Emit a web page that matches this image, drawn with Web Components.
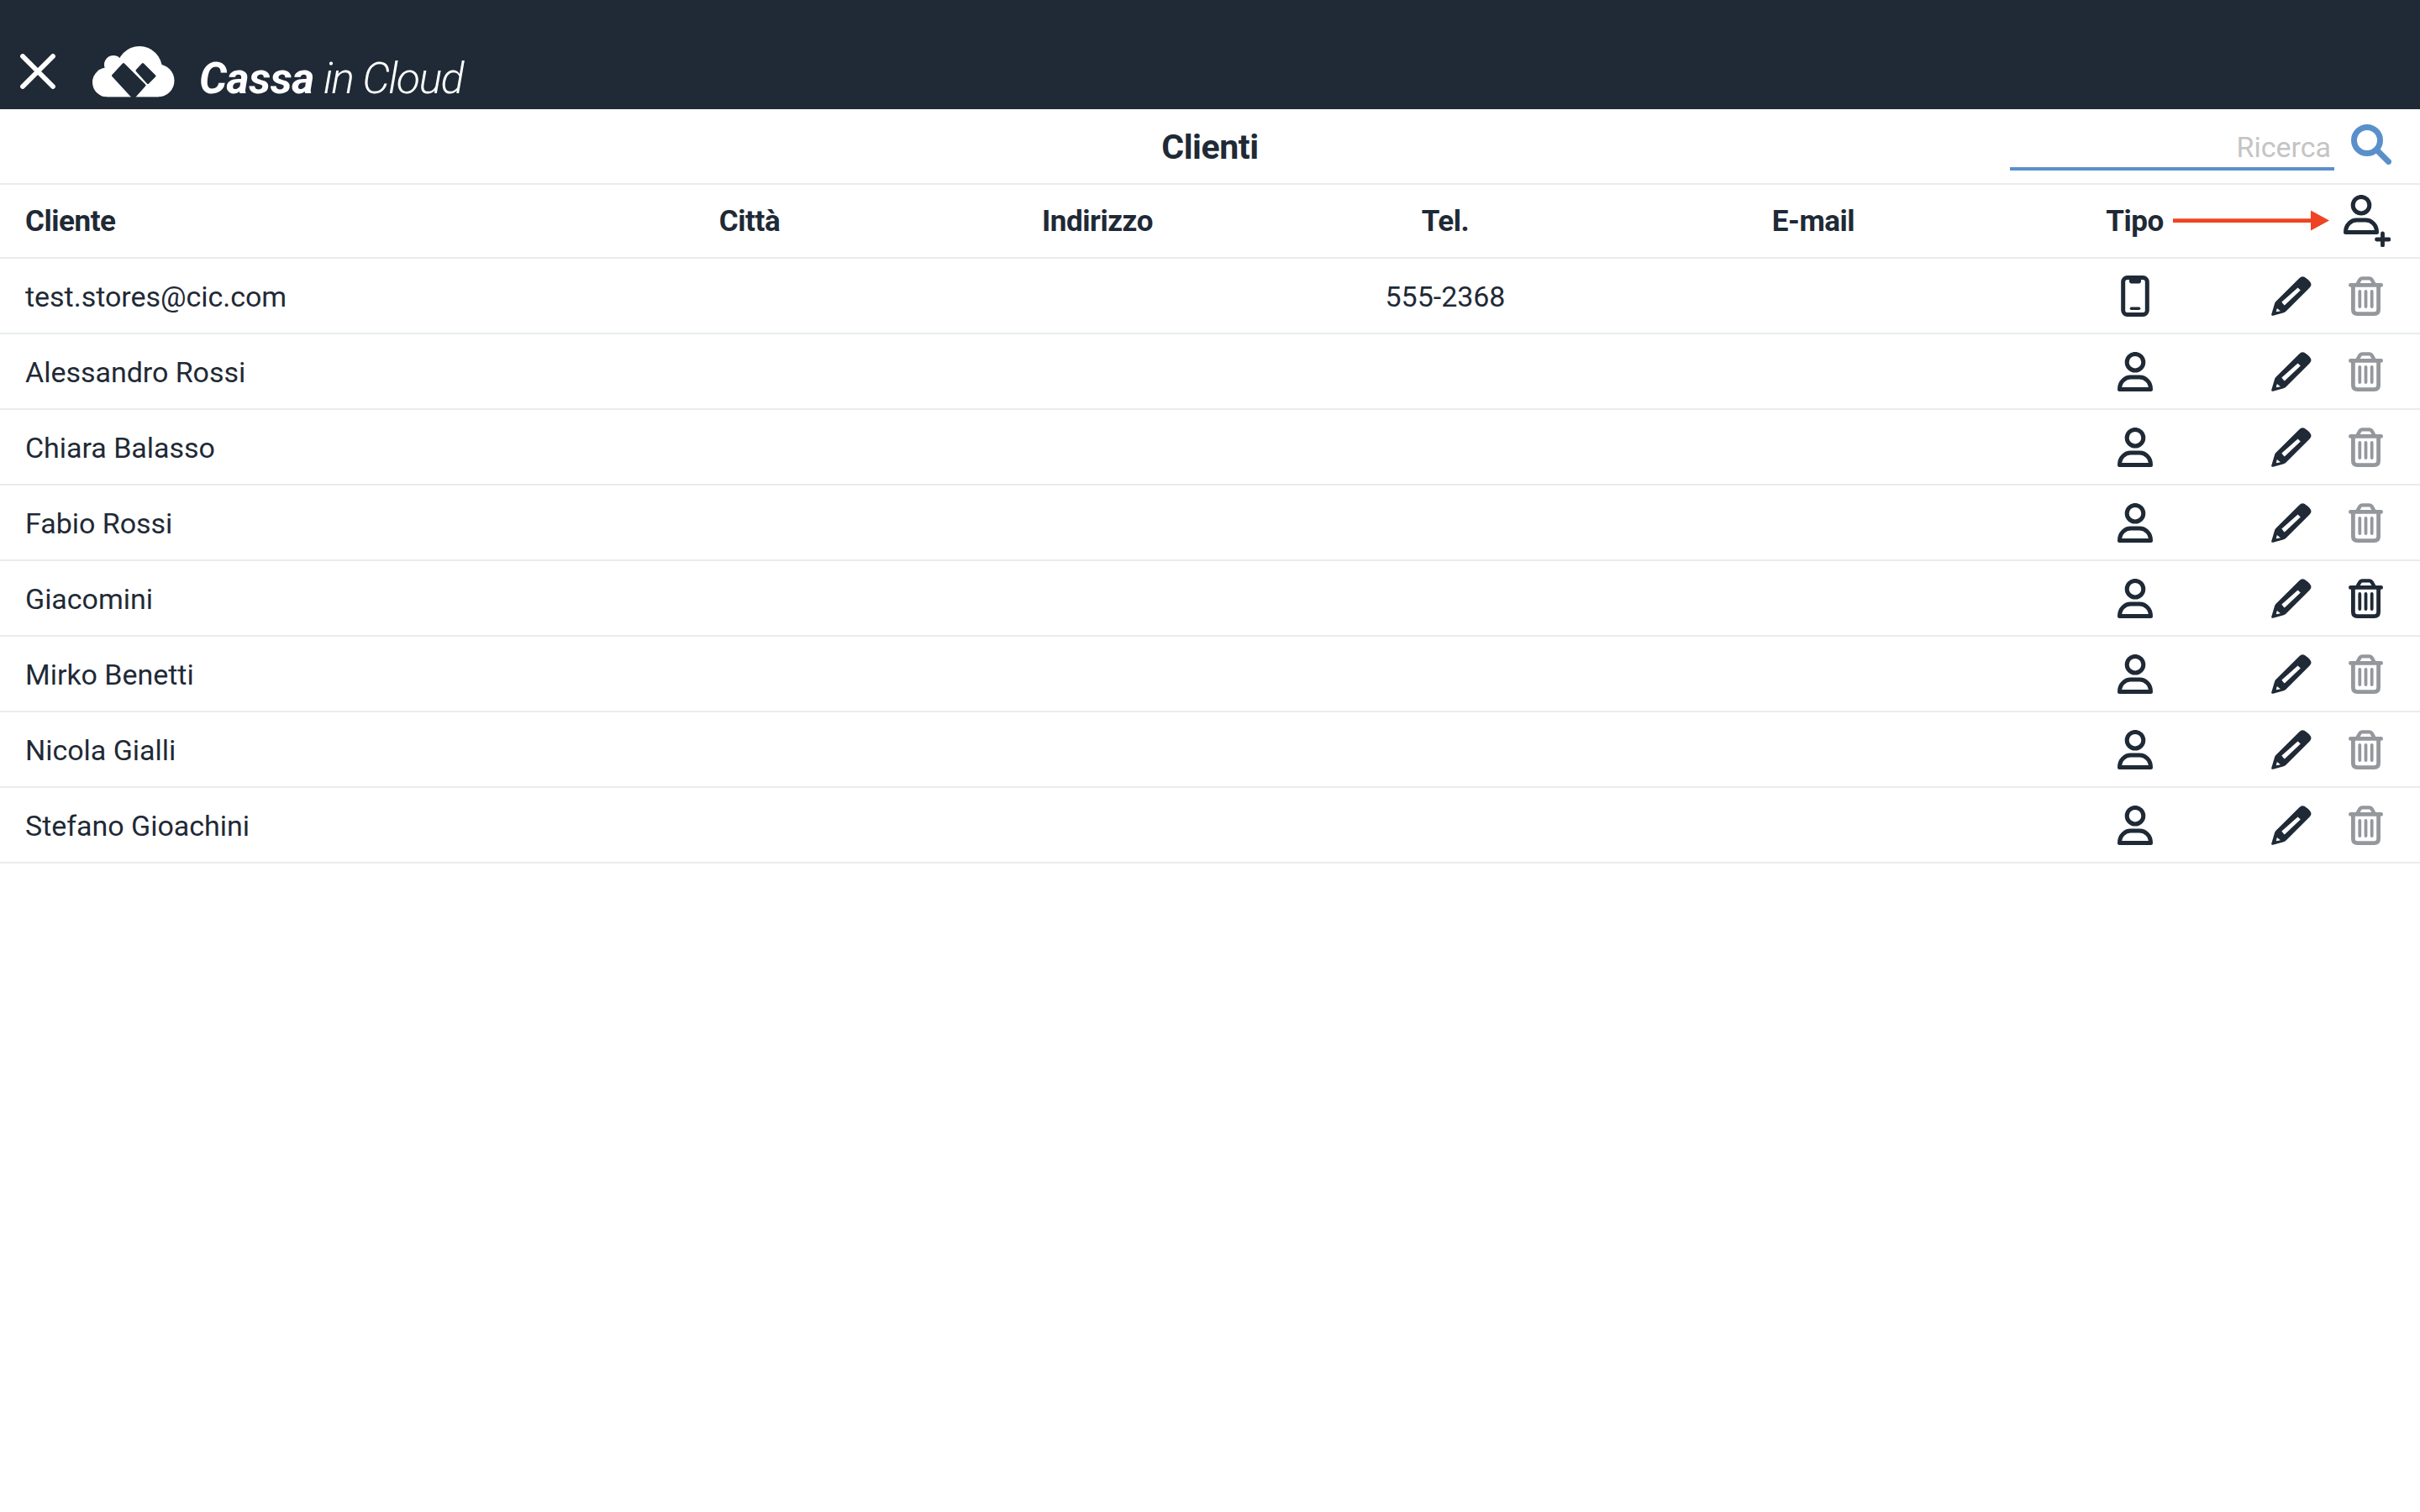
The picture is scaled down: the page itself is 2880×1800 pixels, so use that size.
<!DOCTYPE html>
<html lang="it"><head><meta charset="utf-8"><title>Clienti</title>
<style>
html,body{margin:0;padding:0;background:#fff;font-family:Roboto,"Liberation Sans",sans-serif;color:#1f2a36}
</style></head><body>
<app-header></app-header>
<search-bar title-text="Clienti"></search-bar>
<table-head></table-head>
<client-row name="test.stores@cic.com" tel="555-2368" kind="phone"></client-row>
<client-row name="Alessandro Rossi"></client-row>
<client-row name="Chiara Balasso"></client-row>
<client-row name="Fabio Rossi"></client-row>
<client-row name="Giacomini" hot></client-row>
<client-row name="Mirko Benetti"></client-row>
<client-row name="Nicola Gialli"></client-row>
<client-row name="Stefano Gioachini"></client-row>
<script>
const COLS='grid-template-columns:685px 414px 414px 414px 462px 302px 189px;';
const PERSON='<svg width="44" height="47" viewBox="0 0 44 47" fill="none" stroke="currentColor" stroke-width="5" stroke-linejoin="round"><circle cx="22" cy="12.2" r="9.8"/><path d="M3.5 44.4C3.5 35 10.5 30 16.5 30H27.5C33.5 30 40.5 35 40.5 44.4Z"/></svg>';
const PHONE='<svg width="34" height="49" viewBox="0 0 34 49" fill="none" stroke="currentColor"><rect x="2.7" y="2.5" width="28.6" height="44" rx="5" stroke-width="5"/><path d="M10 3H24V7Q24 9.4 21.8 9.4H12.2Q10 9.4 10 7Z" fill="currentColor" stroke="none"/><path d="M12.5 39.3H21.5" stroke-width="3.6" stroke-linecap="round"/></svg>';
const PENCIL='<svg width="48" height="47" viewBox="0 0 48 47"><path fill="#1f2a36" d="M1.5 46.8C.6 46.8 0 46 .2 45.2L4 32.6Q4.4 31 5.6 29.8L33.6 2Q36 -.4 38.6 .6Q41 1.4 45.4 5.6Q48.4 9 47 11.6Q46.6 12.6 45.4 13.8L17.6 41.6Q16.4 42.8 14.8 43.2L2.2 46.7Z"/><path fill="#fff" d="M12.4 30.6L31.6 13.4L34.8 16.4L15.8 34.6Q13.8 32.8 12.4 30.6Z"/><path fill="#fff" d="M6.8 38L11 41.2L5.8 42.2Z"/></svg>';
const TRASH='<svg width="41" height="47" viewBox="0 0 41 47" fill="none" stroke="currentColor" stroke-linecap="round" stroke-linejoin="round"><path d="M2.4 10.4H38.6" stroke-width="4.8"/><path d="M10.5 9L13.5 3.8Q14.3 2.4 16 2.4H25Q26.7 2.4 27.5 3.8L30.5 9" stroke-width="4.4"/><path d="M5.4 11V39.5Q5.4 44.6 10.5 44.6H30.5Q35.6 44.6 35.6 39.5V11" stroke-width="4.8"/><path d="M13.3 18V36M20.5 18V36M27.7 18V36" stroke-width="3.8"/></svg>';
customElements.define('app-header',class extends HTMLElement{constructor(){super();this.attachShadow({mode:'open'}).innerHTML=`<style>
:host{display:flex;box-sizing:border-box;height:130px;padding-top:40px;background:#1f2a36;color:#fff;align-items:center}
.x{margin-left:24px;display:block}
.logo{margin-left:44px;display:block}
.brand{margin-left:29px;font:italic 300 52px/1 Roboto,sans-serif;white-space:nowrap;padding-top:17px;letter-spacing:-1.7px}
b{font-weight:700;letter-spacing:-.4px}
</style>
<svg class="x" width="42" height="42" viewBox="0 0 42 42" stroke="#fff" stroke-width="5.8" stroke-linecap="round"><path d="M3 3L39 39M39 3L3 39"/></svg>
<svg class="logo" width="98" height="61" viewBox="0 0 98 61"><g fill="#fff"><circle cx="17.5" cy="43" r="17.5"/><circle cx="25" cy="22" r="11"/><circle cx="56" cy="27" r="27"/><circle cx="78" cy="41" r="19.5"/><rect x="17" y="28" width="62" height="33"/></g><g fill="#1f2a36" stroke="#1f2a36" stroke-width="3" stroke-linejoin="round"><path d="M24.5 35L37 21.5L62 46.5L50 60H47.5Z"/><path d="M53 29L60 21.5L74 35.5L66 43.5Z"/></g><rect y="60.4" width="98" height="1" fill="#1f2a36"/></svg>
<span class="brand"><b>Cassa</b> in Cloud</span>`}});
customElements.define('search-bar',class extends HTMLElement{constructor(){super();this.attachShadow({mode:'open'}).innerHTML=`<style>
:host{display:grid;grid-template-columns:1fr auto 1fr;align-items:center;box-sizing:border-box;height:90px;border-bottom:2px solid #e8ecef;color:#1f2a36}
h1{margin:0;padding-top:3px;font:700 41px/1 Roboto,sans-serif;letter-spacing:-.4px;grid-column:2}
.s{grid-column:3;justify-self:end;display:flex;align-items:center;margin-right:34px}
.f{box-sizing:border-box;width:386px;height:50px;margin-top:8px;border-bottom:4px solid #5a90ca;text-align:right;padding-right:4px;font:400 34px/44px Roboto,sans-serif;color:#c4c4c4}
svg{display:block;margin-left:20px;margin-top:-4px}
</style><h1>${this.getAttribute('title-text')}</h1><div class="s"><div class="f">Ricerca</div><svg width="48" height="48" viewBox="0 0 48 48" fill="none" stroke="#5a90ca" stroke-linecap="round"><circle cx="19" cy="19" r="15.5" stroke-width="7"/><path d="M31 31L44.5 44.5" stroke-width="7"/></svg></div>`}});
customElements.define('table-head',class extends HTMLElement{constructor(){super();this.attachShadow({mode:'open'}).innerHTML=`<style>
:host{display:grid;${COLS}align-items:center;position:relative;box-sizing:border-box;height:88px;border-bottom:2px solid #e8ecef;font:700 35px/1 Roboto,sans-serif;letter-spacing:-.45px;color:#1f2a36}
div{text-align:center}.l{text-align:left;padding-left:30px}
.tipo{padding-left:1px}
.arrow{position:absolute;left:2586px;top:30px;display:block}
.add{grid-column:7;margin-left:98px;display:block}
</style><div class="l">Cliente</div><div>Città</div><div>Indirizzo</div><div>Tel.</div><div>E-mail</div><div class="tipo">Tipo</div>
<svg class="add" width="56" height="62" viewBox="0 0 56 62" fill="none" stroke="#1f2a36" stroke-linejoin="round"><circle cx="21" cy="12.2" r="9.8" stroke-width="5"/><path d="M2.5 44.4C2.5 35 9.5 30 15.5 30H26.5C32.5 30 39.5 35 39.5 44.4Z" stroke-width="5"/><path d="M39.5 53H54M46.5 46V60" stroke-width="4.8" stroke-linecap="round"/></svg>
<svg class="arrow" width="186" height="26" viewBox="0 0 186 26"><path d="M0 10.3H164V0.5L186 12.5L164 24.5V14.9H0Z" fill="#ee4423"/></svg>`}});
customElements.define('client-row',class extends HTMLElement{constructor(){super();const k=this.getAttribute('kind')==='phone'?PHONE:PERSON;const hot=this.hasAttribute('hot');this.attachShadow({mode:'open'}).innerHTML=`<style>
:host{display:grid;${COLS}align-items:center;box-sizing:border-box;height:90px;border-bottom:2px solid #e8ecef;font:400 34px/1 Roboto,sans-serif;letter-spacing:-.03px;color:#1f2a36}
.l{padding-left:30px;white-space:nowrap;padding-top:1px}.c{text-align:center;padding-top:1px}
.i{display:flex;justify-content:center;color:#1f2a36;margin-left:1px}svg{display:block}
.a{display:flex;align-items:center;gap:44px;padding-left:12px}
.t{display:block;color:${hot?'#1f2a36':'#94989d'}}
</style><div class="l">${this.getAttribute('name')}</div><div></div><div></div><div class="c">${this.getAttribute('tel')||''}</div><div></div><div class="i">${k}</div><div class="a">${PENCIL}<span class="t">${TRASH}</span></div>`}});
</script></body></html>
